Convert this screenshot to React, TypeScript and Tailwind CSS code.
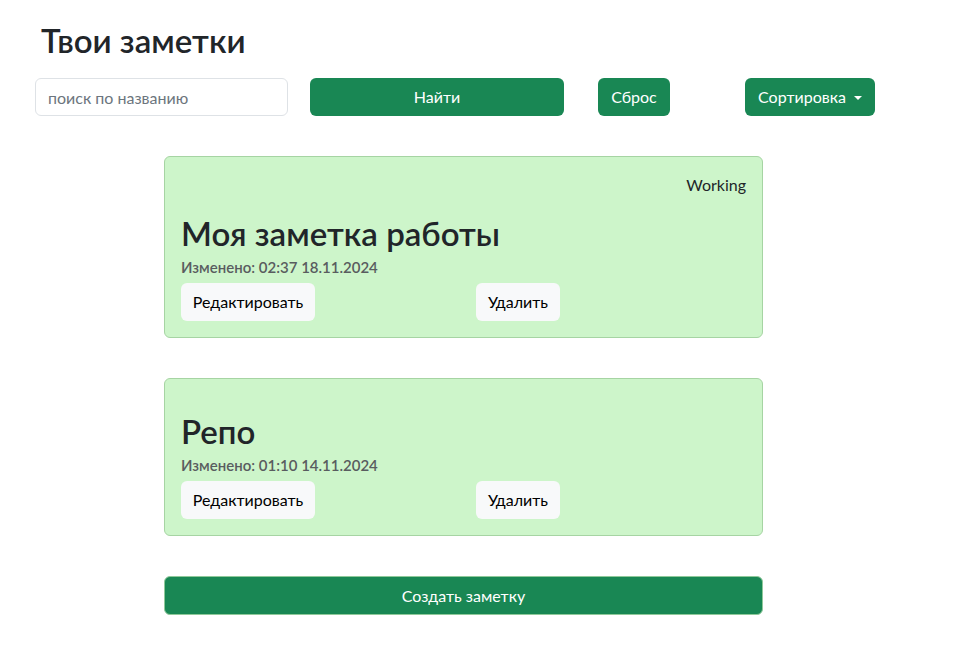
type Note = {
  id: number;
  title: string;
  tag?: string;
  updated: string;
};

const notes: Note[] = [
  { id: 1, title: "Моя заметка работы", tag: "Working", updated: "02:37 18.11.2024" },
  { id: 2, title: "Репо", updated: "01:10 14.11.2024" },
];

function NoteCard({ note }: { note: Note }) {
  return (
    <div className="rounded-md border border-[#a6d4a3] bg-[#cdf5ca] p-4">
      {note.tag && (
        <div className="h-6 text-right text-[16px] leading-6 text-[#212529]">{note.tag}</div>
      )}
      <h1 className="mt-4 text-[33px] leading-[40px] font-semibold text-[#212529]">{note.title}</h1>
      <div className="mt-[3px] text-[15px] leading-[22px] font-semibold text-[#595c5f]">
        Изменено: {note.updated}
      </div>
      <div className="mt-[5px] flex">
        <button className="h-[38px] w-[134px] rounded-md bg-[#f8f9fa] text-[16px] text-black">
          Редактировать
        </button>
        <button className="ml-[161px] h-[38px] w-[84px] rounded-md bg-[#f8f9fa] text-[16px] text-black">
          Удалить
        </button>
      </div>
    </div>
  );
}

export default function App() {
  return (
    <div
      className="min-h-screen bg-white text-[#212529]"
      style={{ fontFamily: 'Lato, "Noto Sans", sans-serif' }}
    >
      <div className="px-[35px] pt-[20px]">
        <h2 className="ml-[6px] text-[33px] leading-[40px] font-semibold">Твои заметки</h2>

        <div className="mt-[18px] flex items-center">
          <input
            type="text"
            placeholder="поиск по названию"
            className="h-[38px] w-[253px] rounded-md border border-[#dee2e6] px-3 text-[16px] placeholder:text-[#6c757d] focus:outline-none"
          />
          <button className="ml-[22px] h-[38px] w-[254px] rounded-md bg-[#198754] text-[16px] text-white">
            Найти
          </button>
          <button className="ml-[34px] h-[38px] w-[72px] rounded-md bg-[#198754] text-[16px] text-white">
            Сброс
          </button>
          <button className="ml-[75px] flex h-[38px] w-[130px] items-center justify-center gap-[8px] rounded-md bg-[#198754] text-[16px] text-white">
            Сортировка
            <span className="mt-[1px] h-0 w-0 border-x-[4px] border-t-[4px] border-x-transparent border-t-white" />
          </button>
        </div>
      </div>

      <div className="mx-[164px] mt-10 w-[599px]">
        <div className="flex flex-col gap-10">
          {notes.map((n) => (
            <NoteCard key={n.id} note={n} />
          ))}
        </div>
        <button className="mt-10 h-[39px] w-full rounded-md border border-[#8fc99a] bg-[#198754] text-[16px] text-white">
          Создать заметку
        </button>
      </div>
    </div>
  );
}
